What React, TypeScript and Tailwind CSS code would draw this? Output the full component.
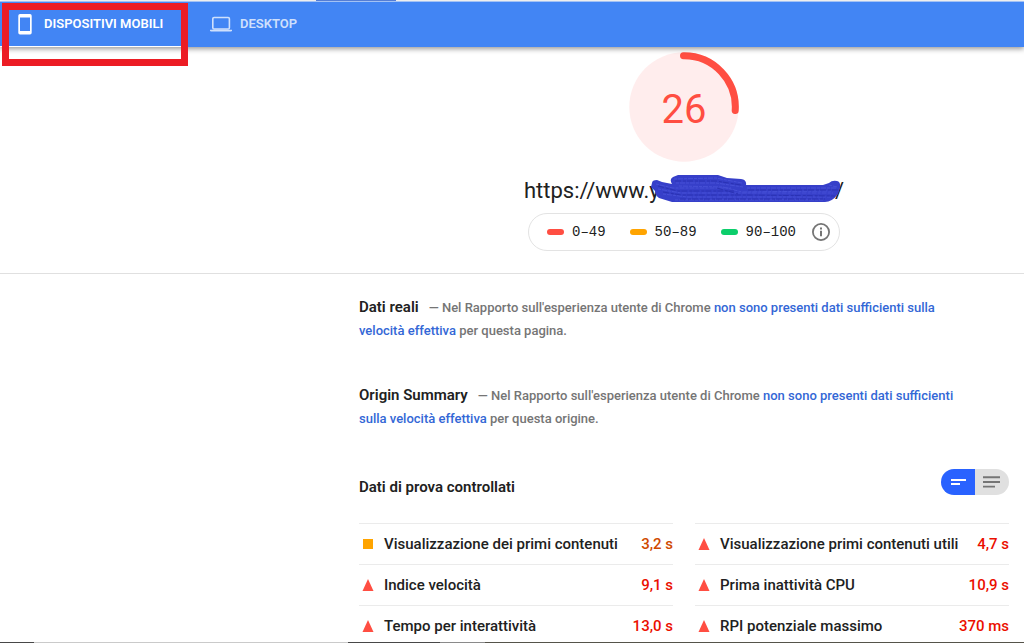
import React, { useState } from "react";

type Status = "average" | "fail";

interface Metric {
  label: string;
  value: string;
  status: Status;
}

const metrics: Metric[] = [
  { label: "Visualizzazione dei primi contenuti", value: "3,2 s", status: "average" },
  { label: "Visualizzazione primi contenuti utili", value: "4,7 s", status: "fail" },
  { label: "Indice velocità", value: "9,1 s", status: "fail" },
  { label: "Prima inattività CPU", value: "10,9 s", status: "fail" },
  { label: "Tempo per interattività", value: "13,0 s", status: "fail" },
  { label: "RPI potenziale massimo", value: "370 ms", status: "fail" },
];

const ranges = [
  { label: "0–49", color: "bg-[#ff4e42]" },
  { label: "50–89", color: "bg-[#ffa400]" },
  { label: "90–100", color: "bg-[#0cce6b]" },
];

function PhoneIcon() {
  return (
    <svg width="14" height="22" viewBox="0 0 14 22" aria-hidden="true">
      <path
        fill="currentColor"
        fillRule="evenodd"
        d="M2 1h10a1.700 1.700 0 0 1 1.700 1.700v17.100a1.700 1.700 0 0 1-1.700 1.700H2a1.700 1.700 0 0 1-1.700-1.700V2.700A1.700 1.700 0 0 1 2 1ZM2 4.500v13.500h10V4.500Z"
      />
    </svg>
  );
}

function LaptopIcon() {
  return (
    <svg width="22" height="16" viewBox="0 0 22 16" aria-hidden="true">
      <rect x="2.800" y="1.500" width="16.600" height="11.500" rx="1.300" fill="none" stroke="currentColor" strokeWidth="1.600" />
      <path fill="currentColor" d="M0 13.700h22v.6a1.200 1.200 0 0 1-1.200 1.200H1.200A1.200 1.200 0 0 1 0 14.300Z" />
    </svg>
  );
}

function Header() {
  return (
    <header className="relative z-10 shrink-0">
      <div className="h-px bg-white pl-[316px]">
        <div className="h-px w-20 bg-[#5b86e5]" />
      </div>
      <nav className="flex h-[46px] border-t border-[#a3c2f5] bg-[#4285f4] text-[13px] leading-4 font-semibold shadow-[0_2px_5px_rgba(0,0,0,0.4)]">
        <a href="#mobile" className="flex w-[188px] items-center gap-3 border-b border-white pl-[18px] text-white">
          <PhoneIcon />
          DISPOSITIVI MOBILI
        </a>
        <a href="#desktop" className="flex items-center gap-2 border-b border-transparent pl-[22px] text-white/75">
          <LaptopIcon />
          DESKTOP
        </a>
      </nav>
      <div className="pointer-events-none absolute top-[3px] left-[2px] h-[63px] w-[186px] border-[7px] border-[#ec1c24]" />
    </header>
  );
}

function Gauge() {
  return (
    <div className="grid h-[110px] w-[110px] place-items-center">
      <svg className="col-start-1 row-start-1" width="110" height="110" viewBox="0 0 110 110" aria-hidden="true">
        <circle cx="55" cy="55" r="54.700" fill="#ffeded" />
        <path d="M54.500 3.700A51.300 51.300 0 0 1 106.200 58.500" fill="none" stroke="#ff4e42" strokeWidth="7" strokeLinecap="round" />
      </svg>
      <span className="col-start-1 row-start-1 pt-[6px] text-[40px] leading-none text-[#ff4e42]">26</span>
    </div>
  );
}

function Scribble() {
  return (
    <svg className="absolute top-0 left-[127px]" width="192" height="30" viewBox="0 0 192 30" aria-hidden="true">
      <path
        fill="#363fc9"
        d="M1 8Q1 5 6 5L11 7 21 9Q18 4 22 2L27 0H67L76 3 90 4Q96 5 95 10H172L178 8Q181 5 186 6 190 7 189 13L187 19Q181 27 174 27H21L8 23Q4 20 4 16L0 12Z"
      />
      <path
        fill="none"
        stroke="#4650d6"
        strokeWidth="1"
        strokeDasharray="3 1 5 1"
        d="M5 9 22 13H80M23 4 65 3 91 8M25 8H65L92 12M7 14 30 18H182M12 19 36 22H179M96 13H185M28 11 72 12 91 17 180 16M24 25H172M178 10 186 12"
      />
      <path
        fill="none"
        stroke="#2a32b4"
        strokeWidth="1"
        strokeDasharray="6 2 3 1"
        d="M24 6H65L90 10M7 11 27 16H83M12 17 30 20H96L184 21M29 24H174M66 13 87 19M97 15H187"
      />
    </svg>
  );
}

function InfoIcon() {
  return (
    <svg width="18" height="18" viewBox="0 0 18 18" aria-hidden="true">
      <circle cx="9" cy="9" r="8.100" fill="none" stroke="#757575" strokeWidth="1.800" />
      <path fill="#757575" d="M8 4.500h2v2H8zM8 7.700h2v5.500H8z" />
    </svg>
  );
}

function Summary() {
  return (
    <section className="flex h-[227px] flex-col items-center border-b border-[#e0e0e0] pt-[5px] lg:pl-[344px]">
      <Gauge />
      <div className="relative mt-[13px] w-[320px]">
        <h1 className="flex h-[30px] justify-between text-[22px] leading-[32px] text-[#212121]">
          <span>https://www.y</span>
          <span>/</span>
        </h1>
        <Scribble />
      </div>
      <div className="mt-2 flex h-[38px] w-[312px] items-center justify-between rounded-full border border-[#e3e3e3] pr-[9px] pl-[18px] font-['Liberation_Mono',monospace] text-[14px] text-[#212121]">
        {ranges.map((range) => (
          <span key={range.label} className="flex items-center gap-2">
            <span className={`h-[6px] w-[17px] rounded-full ${range.color}`} />
            {range.label}
          </span>
        ))}
        <button type="button" aria-label="Informazioni" className="-ml-2">
          <InfoIcon />
        </button>
      </div>
    </section>
  );
}

function FieldNote({ title, link, end }: { title: string; link: string; end: string }) {
  return (
    <p className="max-w-[600px] text-[13px] leading-[23px] font-medium text-[#757575]">
      <strong className="mr-[10px] text-[15px] font-semibold text-[#212121]">{title}</strong>
      {"— Nel Rapporto sull'esperienza utente di Chrome "}
      <a href="#crux" className="text-[#3367d6]">
        {link}
      </a>{" "}
      {end}
    </p>
  );
}

function StatusIcon({ status }: { status: Status }) {
  return (
    <svg width="12" height="12" viewBox="0 0 12 12" aria-hidden="true">
      {status === "average" ? (
        <rect x="1" y="1" width="10" height="10" fill="#ffa400" />
      ) : (
        <path d="M6 0 11.500 12H.5Z" fill="#ff4e42" />
      )}
    </svg>
  );
}

function ViewToggle() {
  const [expanded, setExpanded] = useState(false);
  return (
    <div className="flex h-[26px] w-[68px] overflow-hidden rounded-full">
      <button
        type="button"
        aria-label="Vista compatta"
        aria-pressed={!expanded}
        onClick={() => setExpanded(false)}
        className={`grid flex-1 place-items-center ${expanded ? "bg-[#e0e0e0] text-[#757575]" : "bg-[#2962ff] text-white"}`}
      >
        <svg width="16" height="14" viewBox="0 0 16 14" aria-hidden="true">
          <path fill="currentColor" d="M1 4h15v2H1zM1 8h9v2H1z" />
        </svg>
      </button>
      <button
        type="button"
        aria-label="Vista estesa"
        aria-pressed={expanded}
        onClick={() => setExpanded(true)}
        className={`grid flex-1 place-items-center ${expanded ? "bg-[#2962ff] text-white" : "bg-[#e0e0e0] text-[#757575]"}`}
      >
        <svg width="18" height="14" viewBox="0 0 18 14" aria-hidden="true">
          <path fill="currentColor" d="M0 1.300h17v1.900H0zM0 6h17v1.900H0zM0 10.700h12v1.900H0z" />
        </svg>
      </button>
    </div>
  );
}

function LabData() {
  return (
    <section className="mt-[39px]">
      <div className="flex items-start justify-between">
        <h2 className="mt-[6px] text-[15px] leading-6 font-semibold text-[#212121]">Dati di prova controllati</h2>
        <ViewToggle />
      </div>
      <div className="mt-6 grid grid-cols-1 gap-x-[22px] sm:grid-cols-2">
        {metrics.map((metric) => (
          <div
            key={metric.label}
            className="flex h-[41px] items-center gap-[10px] border-t border-[#ebebeb] pl-[3px] text-[15px] font-medium text-[#212121]"
          >
            <StatusIcon status={metric.status} />
            <span className="flex-1 whitespace-nowrap">{metric.label}</span>
            <span className={`whitespace-nowrap ${metric.status === "average" ? "text-[#d04900]" : "text-[#eb0f00]"}`}>
              {metric.value}
            </span>
          </div>
        ))}
      </div>
    </section>
  );
}

export default function App() {
  return (
    <div className="flex h-screen flex-col bg-white font-[Roboto,sans-serif]">
      <Header />
      <main className="min-h-0 flex-1 overflow-y-auto [scrollbar-width:none]">
        <Summary />
        <div className="px-[15px] pt-[22px] lg:pl-[359px]">
          <FieldNote
            title="Dati reali"
            link="non sono presenti dati sufficienti sulla velocità effettiva"
            end="per questa pagina."
          />
          <div className="mt-[42px]">
            <FieldNote
              title="Origin Summary"
              link="non sono presenti dati sufficienti sulla velocità effettiva"
              end="per questa origine."
            />
          </div>
          <LabData />
        </div>
      </main>
      <div className="flex h-px shrink-0">
        <div className="w-[34px] bg-[#484848]" />
        <div className="w-[314px] bg-[#cacaca]" />
        <div className="w-[92px] bg-[#484848]" />
        <div className="w-[45px] bg-[#8a8a8a]" />
        <div className="flex-1 bg-[#55534a]" />
      </div>
    </div>
  );
}
